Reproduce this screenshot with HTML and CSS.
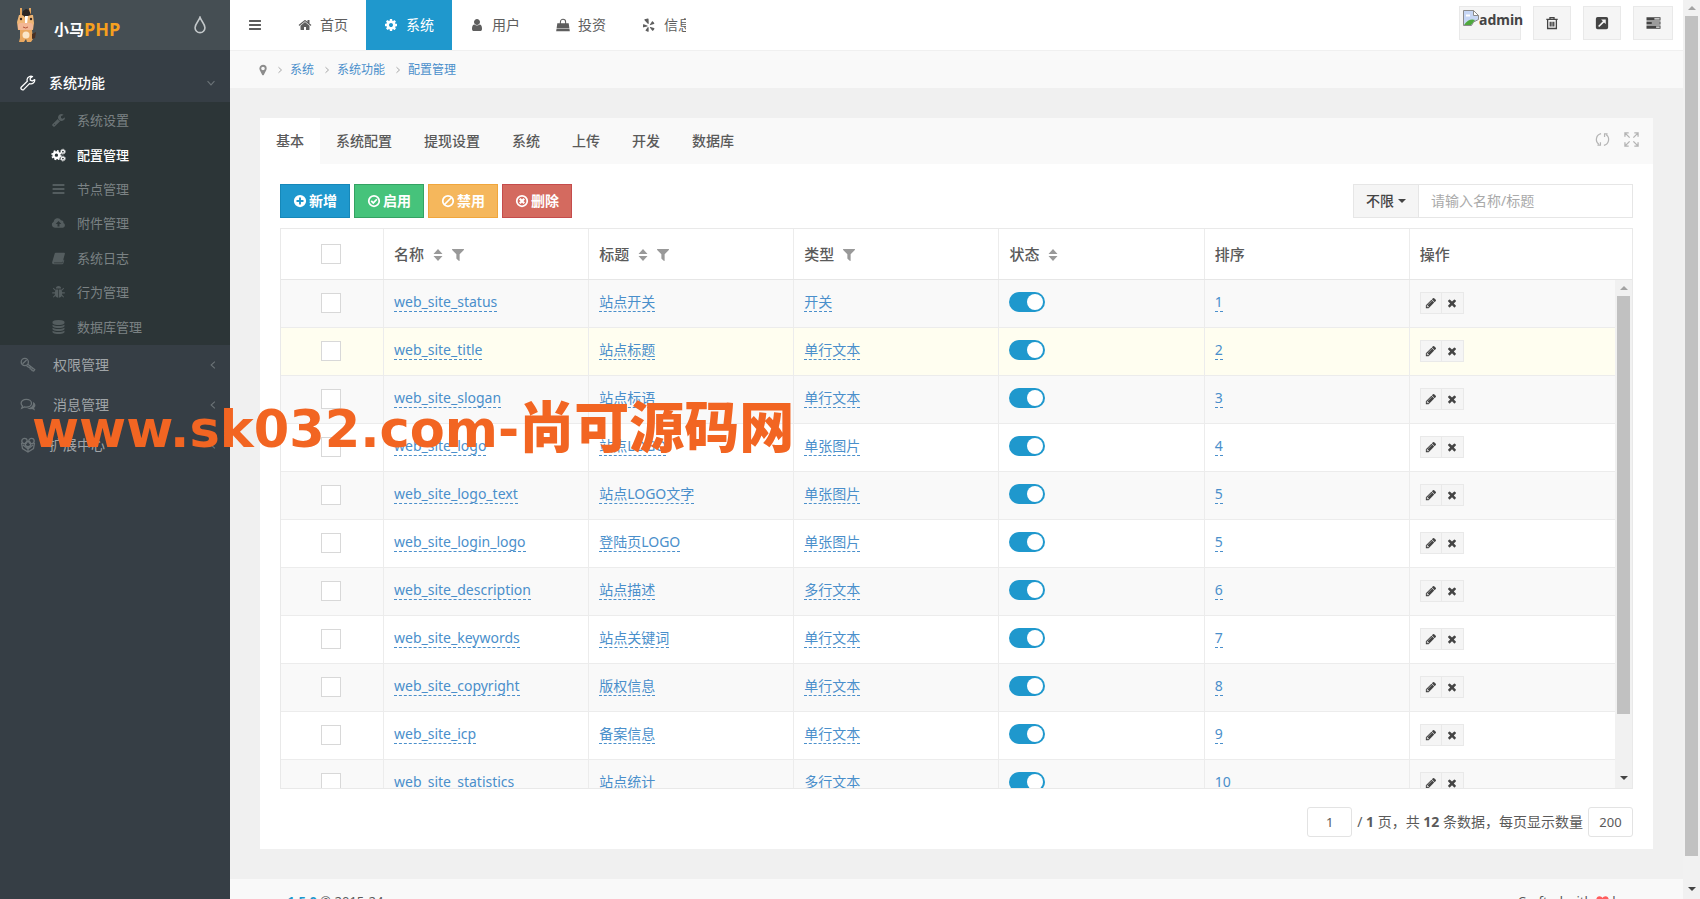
FILE: index.html
```
<!DOCTYPE html>
<html lang="zh-CN">
<head>
<meta charset="utf-8">
<title>配置管理</title>
<link rel="stylesheet" href="styles.css">
</head>
<body>
<svg class="sprite" aria-hidden="true">
  <symbol id="bars" viewBox="0 0 1792 1792"><path d="M1664 1344v128q0 26-19 45t-45 19h-1408q-26 0-45-19t-19-45v-128q0-26 19-45t45-19h1408q26 0 45 19t19 45zm0-512v128q0 26-19 45t-45 19h-1408q-26 0-45-19t-19-45v-128q0-26 19-45t45-19h1408q26 0 45 19t19 45zm0-512v128q0 26-19 45t-45 19h-1408q-26 0-45-19t-19-45v-128q0-26 19-45t45-19h1408q26 0 45 19t19 45z"/></symbol>
  <symbol id="home" viewBox="0 0 1792 1792"><path d="M1472 992v480q0 26-19 45t-45 19h-384v-384h-256v384h-384q-26 0-45-19t-19-45v-480q0-1 .5-3t.5-3l575-474 575 474q1 2 1 6zm223-69l-62 74q-8 9-21 11h-3q-13 0-21-7l-692-577-692 577q-12 8-24 7-13-2-21-11l-62-74q-8-10-7-23.5t11-21.5l719-599q32-26 76-26t76 26l244 204v-195q0-14 9-23t23-9h192q14 0 23 9t9 23v408l219 182q10 8 11 21.5t-7 23.5z"/></symbol>
  <symbol id="cog" viewBox="0 0 1792 1792"><path d="M1152 896q0-106-75-181t-181-75-181 75-75 181 75 181 181 75 181-75 75-181zm512-109v222q0 12-8 23t-20 13l-185 28q-19 54-39 91 35 50 107 138 10 12 10 25t-9 23q-27 37-99 108t-94 71q-12 0-26-9l-138-108q-44 23-91 38-16 136-29 186-7 28-36 28h-222q-14 0-24.5-8.5t-11.5-21.5l-28-184q-49-16-90-37l-141 107q-10 9-25 9-14 0-25-11-126-114-165-168-7-10-7-23 0-12 8-23 15-21 51-66.5t54-70.5q-27-50-41-99l-183-27q-13-2-21-12.5t-8-23.5v-222q0-12 8-23t19-13l186-28q14-46 39-92-40-57-107-138-10-12-10-24 0-10 9-23 26-36 98.5-107.5t94.5-71.5q13 0 26 10l138 107q44-23 91-38 16-136 29-186 7-28 36-28h222q14 0 24.5 8.5t11.5 21.5l28 184q49 16 90 37l142-107q9-9 24-9 13 0 25 10 129 119 165 170 7 8 7 22 0 12-8 23-15 21-51 66.5t-54 70.5q26 50 41 98l183 28q13 2 21 12.5t8 23.5z"/></symbol>
  <symbol id="user" viewBox="0 0 1792 1792"><path d="M1536 1399q0 109-62.5 187t-150.5 78h-854q-88 0-150.5-78t-62.5-187q0-85 8.5-160.5t31.5-152 58.5-131 94-89 134.5-34.5q131 128 313 128t313-128q76 0 134.5 34.5t94 89 58.5 131 31.5 152 8.5 160.5zm-256-887q0 159-112.5 271.5t-271.5 112.5-271.5-112.5-112.5-271.5 112.5-271.5 271.5-112.5 271.5 112.5 112.5 271.5z"/></symbol>
  <symbol id="bag" viewBox="0 0 16 16"><path d="M1.500 6h13l.8 5.600H.7zM.6 12.400h14.800L15.800 15H.2z"/><path d="M5 8V4.500a3 3 0 0 1 6 0V8" fill="none" stroke="currentColor" stroke-width="1.200"/></symbol>
  <symbol id="yelp" viewBox="0 0 16 16"><path d="M3 1.500 6.500.6c.8-.1 1 .3 1 .9l.2 4.600c0 .8-.7 1-1.100.4L2.900 2.500c-.3-.5-.2-.8.1-1zM1.900 7l4 1.500c.8.300.8 1 0 1.200l-3.900 1c-.7.1-.9-.2-.9-.7 0-1 .1-1.700.3-2.500.1-.4.2-.6.5-.5zM7.600 11v4c0 .6-.4.8-.9.700-.9-.2-1.700-.5-2.400-1-.4-.3-.5-.6-.1-1L6.500 10.500c.5-.5 1.100-.2 1.100.5zM9.700 10.200l4 1.300c.5.200.6.5.4 1-.4.800-.9 1.400-1.600 2-.4.300-.7.200-1-.2l-2.300-3.200c-.4-.6-.1-1.100.5-.9zM9.100 7.300l2.300-3.200c.3-.5.700-.5 1-.2.7.6 1.200 1.300 1.600 2.100.2.400.1.700-.4.900l-3.800 1.200c-.7.200-1.100-.2-.7-.8z"/></symbol>
  <symbol id="drop" viewBox="0 0 16 16"><path d="M8 1.200C7 4.500 3.600 7 3.600 10.400a4.400 4.400 0 0 0 8.800 0C12.400 7 9 4.500 8 1.200z" fill="none" stroke="currentColor" stroke-width="1.400"/></symbol>
  <symbol id="wrench" viewBox="0 0 1792 1792"><path d="M448 1472q0-26-19-45t-45-19-45 19-19 45 19 45 45 19 45-19 19-45zm644-420l-682 682q-37 37-90 37-52 0-91-37l-106-108q-38-36-38-90 0-53 38-91l681-681q39 98 114.500 173.500t173.500 114.500zm634-435q0 39-23 106-47 134-164.500 217.500t-258.500 83.500q-185 0-316.500-131.500t-131.500-316.500 131.500-316.500 316.500-131.500q58 0 121.500 16.500t107.500 46.500q16 11 16 28t-16 28l-293 169v224l193 107q5-3 79-48.500t135.500-81 70.500-35.500q15 0 23.500 10t8.500 25z"/></symbol>
  <symbol id="wrench-o" viewBox="0 0 16 16"><path d="M14.700 4.600 12.200 6 10.300 5.200 10.200 3.200 12.500 1.500C10.300.7 7.400 2 7.100 4.500c-.1.800 0 1.300.2 1.800L1.400 12c-1.400 1.600.8 3.800 2.400 2.400l5.700-5.800c2.900.9 5.600-1 5.200-4z" fill="none" stroke="currentColor" stroke-width="1.300" stroke-linejoin="round"/></symbol>
  <symbol id="cogs" viewBox="0 0 18 16"><circle cx="6.500" cy="8.200" r="3.400" fill="none" stroke="currentColor" stroke-width="2.800"/><circle cx="6.500" cy="8.200" r="5.200" fill="none" stroke="currentColor" stroke-width="2" stroke-dasharray="2.100 2"/><circle cx="14.300" cy="4" r="1.800" fill="none" stroke="currentColor" stroke-width="1.500"/><circle cx="14.300" cy="4" r="2.900" fill="none" stroke="currentColor" stroke-width="1" stroke-dasharray="1.300 1"/><circle cx="14.300" cy="12.300" r="1.800" fill="none" stroke="currentColor" stroke-width="1.500"/><circle cx="14.300" cy="12.300" r="2.900" fill="none" stroke="currentColor" stroke-width="1" stroke-dasharray="1.300 1"/></symbol>
  <symbol id="cloud" viewBox="0 0 16 16"><path fill-rule="evenodd" d="M4 13.500a3.600 3.600 0 0 1-1.500-6.900A4.500 4.500 0 0 1 11 5a2.500 2.500 0 0 1 2.700 2.900 3 3 0 0 1-.6 5.600zM8 5.800 4.800 9h2.100v3h2.200V9h2.100z"/></symbol>
  <symbol id="book" viewBox="0 0 16 16"><path d="M5.200 2h9.300c.8 0 1 .5.800 1.200l-2.500 9c-.2.600-.7.900-1.300.9H3.200c-.7 0-.8.900 0 .9h9.300l1.200-4 1-.1-1.200 4.400c-.2.500-.6.800-1.200.8H2.700C1 15 .3 13.600.9 12.200l2.700-9C3.800 2.300 4.400 2 5.200 2z"/></symbol>
  <symbol id="bug" viewBox="0 0 16 16"><path d="M5 4a3 3 0 0 1 6 0zM4.300 5h3.300v9.500A4.400 4.400 0 0 1 3.800 10zM8.400 5h3.300l.5 5a4.400 4.400 0 0 1-3.800 4.500z"/><path d="M4.300 6 2 3.500M11.700 6 14 3.500M4 9H.8M12 9h3.200M4.300 11.500 2 14M11.700 11.500 14 14" stroke="currentColor" stroke-width="1.200"/></symbol>
  <symbol id="database" viewBox="0 0 1792 1792"><path d="M896 768q237 0 443-43t325-127v170q0 69-103 128t-280 93.500-385 34.500-385-34.500-280-93.500-103-128v-170q119 84 325 127t443 43zm0 768q237 0 443-43t325-127v170q0 69-103 128t-280 93.500-385 34.500-385-34.500-280-93.500-103-128v-170q119 84 325 127t443 43zm0-384q237 0 443-43t325-127v170q0 69-103 128t-280 93.500-385 34.500-385-34.500-280-93.500-103-128v-170q119 84 325 127t443 43zm0-1152q208 0 385 34.500t280 93.500 103 128v128q0 69-103 128t-280 93.500-385 34.500-385-34.500-280-93.500-103-128v-128q0-69 103-128t280-93.500 385-34.500z"/></symbol>
  <symbol id="key" viewBox="0 0 16 16"><g fill="none" stroke="currentColor" stroke-width="1.300"><circle cx="4.800" cy="5" r="3.600"/><path d="M2.600 6.800 6.600 3M7.800 7.200l6.900 5.400-1 1.500-1.700-.5-.2-1.500-1.600-.2-.3-1.500-1.500-.3-1.800-1.400"/></g></symbol>
  <symbol id="chat" viewBox="0 0 16 16"><path d="M6.300 2.400c3 0 5.200 1.700 5.200 3.900s-2.200 3.900-5.200 3.900c-.7 0-1.300-.1-1.900-.2l-2.700 1.300.8-2.200C1.600 8.400 1.100 7.400 1.100 6.300c0-2.200 2.200-3.900 5.200-3.900z" fill="none" stroke="currentColor" stroke-width="1.300"/><path d="M12.900 5c1.500.7 2.500 1.800 2.500 3.300 0 1-.5 1.900-1.300 2.600l1 2.500-3.100-1.300c-1.700.4-3.600.1-4.900-.8 3.800-.1 6.700-2.900 5.800-6.300z"/></symbol>
  <symbol id="heap" viewBox="0 0 16 16"><g fill="none" stroke="currentColor" stroke-width="1.300"><circle cx="4.500" cy="4" r="2.700"/><circle cx="11.500" cy="4" r="2.700"/><circle cx="8" cy="7" r="2.700"/><path d="M1.500 6l1 5.500L8 15l5.500-3.500 1-5.500M3 8l5 4 5-4M8 10v5"/></g></symbol>
  <symbol id="pin" viewBox="0 0 16 16"><path fill-rule="evenodd" d="M8 1a4.900 4.900 0 0 1 4.900 4.900c0 .8-.2 1.400-.5 2L9 14.500c-.5.800-1.500.8-2 0L3.600 7.900A4.900 4.900 0 0 1 8 1zm0 2.500a2.400 2.400 0 1 0 0 4.800 2.400 2.400 0 0 0 0-4.800z"/></symbol>
  <symbol id="chevron" viewBox="0 0 16 16"><path d="M5 2.500 11 8l-6 5.500" fill="none" stroke="currentColor" stroke-width="1.700"/></symbol>
  <symbol id="trash" viewBox="0 0 16 16"><path d="M5.700 3V1.800h4.600V3M1.500 3.800h13M3 4v10.300h10V4M6 6.500v5.500M8 6.500v5.500M10 6.500v5.500" fill="none" stroke="currentColor" stroke-width="1.500"/></symbol>
  <symbol id="external" viewBox="0 0 16 16"><path fill-rule="evenodd" d="M3 1h10a2 2 0 0 1 2 2v10a2 2 0 0 1-2 2H3a2 2 0 0 1-2-2V3a2 2 0 0 1 2-2zm4 3 2 2-5.500 5.300 1.400 1.400L10.300 7.300l2 1.900V4z"/></symbol>
  <symbol id="tasks" viewBox="0 0 16 16"><path fill-rule="evenodd" d="M0 1.500h16v3.600H0zm9 1.200v1.200h6V2.700zM0 6.200h16v3.600H0zm6 1.200v1.200h9V7.400zM0 10.900h16v3.600H0zm11 1.200v1.200h4v-1.200z"/></symbol>
  <symbol id="refresh" viewBox="0 0 16 16"><path d="M6.500 1.800A6.300 6.300 0 0 0 4 13M9.500 14.200A6.300 6.300 0 0 0 12 3M5.800 10.800V14H2.600M10.200 5.200V2h3.200" fill="none" stroke="currentColor" stroke-width="1.300"/></symbol>
  <symbol id="expand" viewBox="0 0 16 16"><path d="M1 5V1h4M11 1h4v4M15 11v4h-4M5 15H1v-4M1.500 1.500l4.500 4.500M14.500 1.500 10 6M14.500 14.500 10 10M1.500 14.500 6 10" fill="none" stroke="currentColor" stroke-width="1.400"/></symbol>
  <symbol id="plus-c" viewBox="0 0 16 16"><path fill-rule="evenodd" d="M8 1a7 7 0 1 1 0 14A7 7 0 0 1 8 1zM6.900 4v2.900H4v2.200h2.900V12h2.200V9.100H12V6.900H9.100V4z"/></symbol>
  <symbol id="check-c" viewBox="0 0 16 16"><g fill="none" stroke="currentColor" stroke-width="2"><circle cx="8" cy="8" r="6"/><path d="M4.800 7.800 7.200 10.200 11.300 6"/></g></symbol>
  <symbol id="ban" viewBox="0 0 16 16"><g fill="none" stroke="currentColor" stroke-width="2"><circle cx="8" cy="8" r="6"/><path d="M4 12 12 4"/></g></symbol>
  <symbol id="times-c" viewBox="0 0 16 16"><g fill="none" stroke="currentColor" stroke-width="2"><circle cx="8" cy="8" r="6"/><path d="M5.500 5.500l5 5M10.500 5.500l-5 5" stroke-width="2.600"/></g></symbol>
  <symbol id="sort" viewBox="0 0 10 14"><path d="M5 1l4.500 5h-9zM5 13 .5 8h9z"/></symbol>
  <symbol id="filter" viewBox="0 0 1408 1408"><path d="M1403 39q17 41-14 70l-493 493v742q0 42-39 59-13 5-25 5-27 0-45-19l-256-256q-19-19-19-45v-486l-493-493q-31-29-14-70 17-39 59-39h1280q42 0 59 39z"/></symbol>
  <symbol id="pencil" viewBox="0 0 1792 1792"><path d="M491 1536l91-91-235-235-91 91v107h128v128h107zm523-928q0-22-22-22-10 0-17 7l-542 542q-7 7-7 17 0 22 22 22 10 0 17-7l542-542q7-7 7-17zm-54-192l416 416-832 832h-416v-416zm683 96q0 53-37 90l-166 166-416-416 166-165q36-38 90-38 53 0 91 38l235 234q37 39 37 91z"/></symbol>
  <symbol id="times" viewBox="0 0 1792 1792"><path d="M1490 1322q0 40-28 68l-136 136q-28 28-68 28t-68-28l-294-294-294 294q-28 28-68 28t-68-28l-136-136q-28-28-28-68t28-68l294-294-294-294q-28-28-28-68t28-68l136-136q28-28 68-28t68 28l294 294 294-294q28-28 68-28t68 28l136 136q28 28 28 68t-28 68l-294 294 294 294q28 28 28 68z"/></symbol>
  <symbol id="caret" viewBox="0 0 8 4"><path d="M0 0h8L4 4z"/></symbol>
  <symbol id="caret-up" viewBox="0 0 8 4"><path d="M0 4h8L4 0z"/></symbol>
  <symbol id="heart" viewBox="0 0 16 16"><path d="M8 14.500 1.500 8.300C-1 5.500 1 1.500 4.300 1.500 6 1.500 7.200 2.500 8 3.700 8.800 2.500 10 1.500 11.700 1.500 15 1.500 17 5.500 14.500 8.300z"/></symbol>
</svg>

<div class="page">
  <aside class="sidebar">
    <div class="brand">
      <svg class="mascot" viewBox="0 0 20 36" aria-hidden="true">
        <path d="M4 1h2v9H4zM13 1h2v9h-2z" fill="#e3a560"/><path d="M3 8h14l1 8-1 7H2L1 15z" fill="#efb676"/>
        <path d="M6 8 7 4l3-2 3 1 2 5-3 1-2 3-2-3z" fill="#2c2522"/><path d="M9 9h3l-1 8H9z" fill="#fff"/>
        <circle cx="5" cy="12" r="1.200" fill="#3a2a22"/><circle cx="15" cy="12" r="1.200" fill="#3a2a22"/>
        <rect x="2" y="16" width="15" height="7" rx="3" fill="#f3b795"/><path d="M7 20q3 2 5 0" stroke="#b4573e" fill="none"/>
        <path d="M4 23h12l1 9-2 3h-4l-1-3-2 3H3l1-4z" fill="#e9a860"/><ellipse cx="10" cy="28" rx="3.500" ry="3.500" fill="#fbe7c9"/>
        <path d="M16 27l4-2-1 6-3 1z" fill="#4a3022"/>
      </svg>
      <span class="brand-cn">小马</span><span class="brand-php">PHP</span>
      <svg class="icon brand-drop"><use href="#drop"/></svg>
    </div>
    <nav>
      <a class="group open" href="#"><svg class="icon"><use href="#wrench-o"/></svg><span>系统功能</span><svg class="arrow down"><use href="#chevron"/></svg></a>
      <div class="submenu">
        <a href="#"><svg class="icon"><use href="#wrench"/></svg>系统设置</a>
        <a class="current" href="#"><svg class="icon"><use href="#cogs"/></svg>配置管理</a>
        <a href="#"><svg class="icon"><use href="#bars"/></svg>节点管理</a>
        <a href="#"><svg class="icon"><use href="#cloud"/></svg>附件管理</a>
        <a href="#"><svg class="icon"><use href="#book"/></svg>系统日志</a>
        <a href="#"><svg class="icon"><use href="#bug"/></svg>行为管理</a>
        <a href="#"><svg class="icon"><use href="#database"/></svg>数据库管理</a>
      </div>
      <a class="group" href="#"><svg class="icon"><use href="#key"/></svg><span>权限管理</span><svg class="arrow left"><use href="#chevron"/></svg></a>
      <a class="group" href="#"><svg class="icon"><use href="#chat"/></svg><span>消息管理</span><svg class="arrow left"><use href="#chevron"/></svg></a>
      <a class="group tight" href="#"><svg class="icon"><use href="#heap"/></svg><span>扩展中心</span><svg class="arrow left"><use href="#chevron"/></svg></a>
    </nav>
  </aside>

  <div class="main">
    <header class="topbar">
      <button class="burger" type="button" aria-label="菜单"><svg class="icon"><use href="#bars"/></svg></button>
      <nav class="topnav">
        <a href="#"><svg class="icon"><use href="#home"/></svg>首页</a>
        <a class="active" href="#"><svg class="icon"><use href="#cog"/></svg>系统</a>
        <a href="#"><svg class="icon"><use href="#user"/></svg>用户</a>
        <a href="#"><svg class="icon"><use href="#bag"/></svg>投资</a>
        <a class="cut" href="#"><svg class="icon"><use href="#yelp"/></svg><span>信息</span></a>
      </nav>
      <div class="tools">
        <button class="tool avatar" type="button">
          <svg class="broken" viewBox="0 0 16 16" aria-hidden="true"><path d="M.5.500h10l5 5v4l-5 2.500-2 3.500h-8z" fill="#c6d6f5" stroke="#8b8b8b"/><path d="M10.500.5v5h5z" fill="#fff" stroke="#8b8b8b"/><path d="M3 4.500h4v2H3z" fill="#fff"/><path d="M1 15q5-7 11-5l-4 5z" fill="#4fa83d"/></svg><span>admin</span>
        </button>
        <button class="tool" type="button" aria-label="清空缓存"><svg class="icon"><use href="#trash"/></svg></button>
        <button class="tool" type="button" aria-label="打开前台"><svg class="icon"><use href="#external"/></svg></button>
        <button class="tool" type="button" aria-label="侧栏"><svg class="icon wide"><use href="#tasks"/></svg></button>
      </div>
    </header>

    <nav class="crumbs" aria-label="位置">
      <svg class="icon"><use href="#pin"/></svg>
      <svg class="sep"><use href="#chevron"/></svg><a href="#">系统</a>
      <svg class="sep"><use href="#chevron"/></svg><a href="#">系统功能</a>
      <svg class="sep"><use href="#chevron"/></svg><a href="#">配置管理</a>
    </nav>

    <main class="content">
      <section class="block">
        <div class="tabs">
          <a class="active" href="#">基本</a><a href="#">系统配置</a><a href="#">提现设置</a><a href="#">系统</a><a href="#">上传</a><a href="#">开发</a><a href="#">数据库</a>
          <div class="tab-tools">
            <button type="button" aria-label="刷新"><svg class="icon"><use href="#refresh"/></svg></button>
            <button type="button" aria-label="全屏"><svg class="icon"><use href="#expand"/></svg></button>
          </div>
        </div>
        <div class="body">
          <div class="toolbar">
            <button class="btn blue" type="button"><svg class="icon"><use href="#plus-c"/></svg>新增</button>
            <button class="btn green" type="button"><svg class="icon"><use href="#check-c"/></svg>启用</button>
            <button class="btn orange" type="button"><svg class="icon"><use href="#ban"/></svg>禁用</button>
            <button class="btn red" type="button"><svg class="icon"><use href="#times-c"/></svg>删除</button>
            <div class="search">
              <button type="button">不限<svg class="caret"><use href="#caret"/></svg></button>
              <input type="text" placeholder="请输入名称/标题" aria-label="搜索">
            </div>
          </div>

          <div class="grid">
            <table class="head">
              <colgroup><col class="c-check"><col><col><col><col><col><col></colgroup>
              <thead><tr>
                <th class="check"><input type="checkbox" aria-label="全选"></th>
                <th>名称<svg class="sort"><use href="#sort"/></svg><svg class="filter"><use href="#filter"/></svg></th>
                <th>标题<svg class="sort"><use href="#sort"/></svg><svg class="filter"><use href="#filter"/></svg></th>
                <th>类型<svg class="filter"><use href="#filter"/></svg></th>
                <th>状态<svg class="sort"><use href="#sort"/></svg></th>
                <th>排序</th>
                <th>操作</th>
              </tr></thead>
            </table>
            <div class="scroll">
              <div class="rows">
                <table>
                  <colgroup><col class="c-check"><col><col><col><col><col><col></colgroup>
                  <tbody>
                    <tr><td class="check"><input type="checkbox" aria-label="选择"></td><td><a href="#">web_site_status</a></td><td><a href="#">站点开关</a></td><td><a href="#">开关</a></td><td><input class="switch" type="checkbox" checked aria-label="状态"></td><td><a href="#">1</a></td><td><div class="acts"><button type="button" aria-label="编辑"><svg><use href="#pencil"/></svg></button><button type="button" aria-label="删除"><svg><use href="#times"/></svg></button></div></td></tr>
                    <tr class="hover"><td class="check"><input type="checkbox" aria-label="选择"></td><td><a href="#">web_site_title</a></td><td><a href="#">站点标题</a></td><td><a href="#">单行文本</a></td><td><input class="switch" type="checkbox" checked aria-label="状态"></td><td><a href="#">2</a></td><td><div class="acts"><button type="button" aria-label="编辑"><svg><use href="#pencil"/></svg></button><button type="button" aria-label="删除"><svg><use href="#times"/></svg></button></div></td></tr>
                    <tr><td class="check"><input type="checkbox" aria-label="选择"></td><td><a href="#">web_site_slogan</a></td><td><a href="#">站点标语</a></td><td><a href="#">单行文本</a></td><td><input class="switch" type="checkbox" checked aria-label="状态"></td><td><a href="#">3</a></td><td><div class="acts"><button type="button" aria-label="编辑"><svg><use href="#pencil"/></svg></button><button type="button" aria-label="删除"><svg><use href="#times"/></svg></button></div></td></tr>
                    <tr><td class="check"><input type="checkbox" aria-label="选择"></td><td><a href="#">web_site_logo</a></td><td><a href="#">站点LOGO</a></td><td><a href="#">单张图片</a></td><td><input class="switch" type="checkbox" checked aria-label="状态"></td><td><a href="#">4</a></td><td><div class="acts"><button type="button" aria-label="编辑"><svg><use href="#pencil"/></svg></button><button type="button" aria-label="删除"><svg><use href="#times"/></svg></button></div></td></tr>
                    <tr><td class="check"><input type="checkbox" aria-label="选择"></td><td><a href="#">web_site_logo_text</a></td><td><a href="#">站点LOGO文字</a></td><td><a href="#">单张图片</a></td><td><input class="switch" type="checkbox" checked aria-label="状态"></td><td><a href="#">5</a></td><td><div class="acts"><button type="button" aria-label="编辑"><svg><use href="#pencil"/></svg></button><button type="button" aria-label="删除"><svg><use href="#times"/></svg></button></div></td></tr>
                    <tr><td class="check"><input type="checkbox" aria-label="选择"></td><td><a href="#">web_site_login_logo</a></td><td><a href="#">登陆页LOGO</a></td><td><a href="#">单张图片</a></td><td><input class="switch" type="checkbox" checked aria-label="状态"></td><td><a href="#">5</a></td><td><div class="acts"><button type="button" aria-label="编辑"><svg><use href="#pencil"/></svg></button><button type="button" aria-label="删除"><svg><use href="#times"/></svg></button></div></td></tr>
                    <tr><td class="check"><input type="checkbox" aria-label="选择"></td><td><a href="#">web_site_description</a></td><td><a href="#">站点描述</a></td><td><a href="#">多行文本</a></td><td><input class="switch" type="checkbox" checked aria-label="状态"></td><td><a href="#">6</a></td><td><div class="acts"><button type="button" aria-label="编辑"><svg><use href="#pencil"/></svg></button><button type="button" aria-label="删除"><svg><use href="#times"/></svg></button></div></td></tr>
                    <tr><td class="check"><input type="checkbox" aria-label="选择"></td><td><a href="#">web_site_keywords</a></td><td><a href="#">站点关键词</a></td><td><a href="#">单行文本</a></td><td><input class="switch" type="checkbox" checked aria-label="状态"></td><td><a href="#">7</a></td><td><div class="acts"><button type="button" aria-label="编辑"><svg><use href="#pencil"/></svg></button><button type="button" aria-label="删除"><svg><use href="#times"/></svg></button></div></td></tr>
                    <tr><td class="check"><input type="checkbox" aria-label="选择"></td><td><a href="#">web_site_copyright</a></td><td><a href="#">版权信息</a></td><td><a href="#">单行文本</a></td><td><input class="switch" type="checkbox" checked aria-label="状态"></td><td><a href="#">8</a></td><td><div class="acts"><button type="button" aria-label="编辑"><svg><use href="#pencil"/></svg></button><button type="button" aria-label="删除"><svg><use href="#times"/></svg></button></div></td></tr>
                    <tr><td class="check"><input type="checkbox" aria-label="选择"></td><td><a href="#">web_site_icp</a></td><td><a href="#">备案信息</a></td><td><a href="#">单行文本</a></td><td><input class="switch" type="checkbox" checked aria-label="状态"></td><td><a href="#">9</a></td><td><div class="acts"><button type="button" aria-label="编辑"><svg><use href="#pencil"/></svg></button><button type="button" aria-label="删除"><svg><use href="#times"/></svg></button></div></td></tr>
                    <tr><td class="check"><input type="checkbox" aria-label="选择"></td><td><a href="#">web_site_statistics</a></td><td><a href="#">站点统计</a></td><td><a href="#">多行文本</a></td><td><input class="switch" type="checkbox" checked aria-label="状态"></td><td><a href="#">10</a></td><td><div class="acts"><button type="button" aria-label="编辑"><svg><use href="#pencil"/></svg></button><button type="button" aria-label="删除"><svg><use href="#times"/></svg></button></div></td></tr>
                  </tbody>
                </table>
              </div>
              <div class="bar" aria-hidden="true"><svg class="tip dim"><use href="#caret-up"/></svg><div class="track"><i class="thumb"></i></div><svg class="tip"><use href="#caret"/></svg></div>
            </div>
          </div>

          <div class="pager">
            <input type="text" value="1" aria-label="页码">
            <span>/ <b>1</b> 页，共 <b>12</b> 条数据，每页显示数量</span>
            <input type="text" value="200" aria-label="每页显示数量">
          </div>
        </div>
      </section>
    </main>

    <footer class="footer">
      <div><a href="#">xpp 1.5.0</a> © 2015-24</div>
      <div>Crafted with <svg class="heart"><use href="#heart"/></svg> by <a href="#">xpp</a></div>
    </footer>
  </div>

  <div class="bar outer" aria-hidden="true"><svg class="tip dim"><use href="#caret-up"/></svg><div class="track"><i class="thumb"></i></div><svg class="tip"><use href="#caret"/></svg></div>
  <div class="watermark">www.sk032.com-<span>尚可源码网</span></div>
</div>
</body>
</html>
```
FILE: styles.css
```
* { box-sizing: border-box; }
body {
  margin: 0;
  font: 14px/20px "Noto Sans", "Noto Sans CJK SC", sans-serif;
  color: #5a5a5a;
  background: #f0f0f0;
}
a { color: #4a8fcb; text-decoration: none; }
button, input { font: inherit; color: inherit; margin: 0; }
button { cursor: pointer; }
svg { fill: currentColor; flex: none; }
.sprite { position: absolute; width: 0; height: 0; }
.icon { width: 14px; height: 14px; }

.page { position: relative; display: flex; height: 100vh; overflow: hidden; }

/* Sidebar */
.sidebar { width: 230px; flex: none; background: #363e45; }
.brand { display: flex; align-items: center; height: 50px; padding: 0 21px 0 16px; background: #454e53; }
.mascot { width: 20px; height: 36px; margin-right: 18px; }
.brand-cn { font-size: 15px; font-weight: 700; color: #fff; padding-top: 8px; }
.brand-php { font: 700 18px/20px "Open Sans", sans-serif; color: #f6a01f; padding-top: 8px; }
.brand-drop { width: 18px; height: 18px; margin-left: auto; color: #c3c8ca; }
.group { display: flex; align-items: center; height: 40px; padding: 0 12px 0 20px; color: #a0a5a8; }
.group .icon { width: 16px; height: 16px; margin-right: 17px; color: #6b7377; }
.group .arrow { width: 10px; height: 10px; margin-left: auto; color: #6b7377; }
.arrow.down { transform: rotate(90deg); }
.arrow.left { transform: rotate(180deg); }
.group.tight .icon { margin-right: 13px; }
.group.open { height: 52px; padding: 14px 14px 0 20px; color: #fff; font-weight: 500; }
.group.open .icon { color: #fff; margin-right: 13px; }
.submenu { display: grid; grid-auto-rows: 1fr; height: 243px; padding: 1px 0; background: #2c3537; font-size: 13px; }
.submenu a { display: flex; align-items: center; padding-left: 51px; color: #7b8284; }
.submenu .icon { width: 15px; margin-right: 11px; color: #545d5f; }
.submenu .current, .submenu .current .icon { color: #fff; font-weight: 500; }

/* Top bar */
.main { flex: 1; min-width: 0; display: flex; flex-direction: column; }
.topbar { display: flex; flex: none; height: 51px; background: #fff; border-bottom: 1px solid #f0f0f0; }
.burger { display: flex; align-items: center; width: 50px; padding: 0 0 0 18px; border: 0; background: none; }
.topnav { display: flex; }
.topnav a { display: flex; align-items: center; gap: 8px; padding: 0 18px; color: #5e5e5e; }
.topnav .active { background: #1f98cd; color: #fff; }
.topnav .cut span { width: 22px; height: 20px; overflow: hidden; white-space: nowrap; }
.tools { display: flex; gap: 12px; margin-left: auto; padding: 6px 10px 10px 0; }
.tool { display: flex; align-items: center; justify-content: center; width: 38px; padding: 0; background: #f5f5f5; border: 1px solid #e9e9e9; color: #444; }
.tool:last-child { width: 40px; }
.tool .wide { width: 15px; }
.avatar { width: 62px; justify-content: flex-start; align-items: flex-start; padding: 3px; font-weight: 700; }
.broken { width: 16px; height: 16px; }

.crumbs { display: flex; flex: none; align-items: center; height: 37px; padding-left: 27px; background: #f9f9f9; font-size: 12px; }
.crumbs .icon { width: 12px; height: 12px; color: #8c8c8c; margin-right: 5px; }
.crumbs .sep { width: 8px; height: 8px; margin: 0 6px 0 9px; color: #999; }
.crumbs .icon + .sep { margin-left: 2px; }

/* Block */
.content { padding: 30px; flex: none; }
.block { background: #fff; }
.tabs { display: flex; height: 46px; background: #f9f9f9; }
.tabs a { padding: 13px 16px; color: #5a5a5a; font-weight: 500; }
.tabs .active { background: #fff; }
.tab-tools { display: flex; gap: 14px; margin-left: auto; padding: 14px 14px 0 0; }
.tab-tools button { height: 15px; padding: 0; border: 0; background: none; color: #b4b4b4; display: flex; }
.tab-tools .icon { width: 15px; height: 15px; }
.body { padding: 20px 20px 12px; }
.toolbar { display: flex; gap: 4px; height: 34px; margin-bottom: 10px; }
.btn { display: flex; align-items: center; gap: 2px; padding: 0 12px; border: 1px solid; color: #fff; font-weight: 700; }
.blue { background: #1f98cd; border-color: #1688b9; }
.green { background: #46c37b; border-color: #34a263; }
.orange { background: #f5b75c; border-color: #f0a63c; }
.red { background: #d46a5f; border-color: #c54c4c; }
.btn .icon { width: 14px; }
.search { display: flex; margin-left: auto; width: 280px; }
.search button { display: flex; align-items: center; gap: 4px; padding: 0 12px; background: #f5f5f5; border: 1px solid #e6e6e6; font-weight: 500; color: #444; }
.caret { width: 8px; height: 4px; }
.search input { flex: 1; min-width: 0; padding: 0 12px; border: 1px solid #e6e6e6; border-left: 0; background: #fff; }
.search input::placeholder { color: #aaa; }

/* Data table */
.grid { border: 1px solid #e9e9e9; }
table { width: calc(100% - 17px); table-layout: fixed; border-collapse: separate; border-spacing: 0; }
.c-check { width: 103px; }
th, td { padding: 0 10px; text-align: left; border-right: 1px solid #ececec; }
th:last-child, td:last-child { border-right: 0; }
.head { height: 50px; }
th { font-size: 15px; font-weight: 500; }
th.check, td.check { text-align: center; padding: 0 2px 0 0; }
.sort { width: 10px; height: 14px; margin-left: 9px; vertical-align: -2px; color: #999; }
.filter { width: 12px; height: 12px; margin-left: 9px; vertical-align: -1px; color: #999; }
.scroll { display: flex; height: 509px; border-top: 1px solid #e6e6e6; }
.rows { flex: 1; min-width: 0; overflow: hidden; }
.rows table { width: 100%; }
.rows td { height: 48px; padding-top: 12px; vertical-align: top; border-bottom: 1px solid #ececec; }
.rows td.check { padding-top: 13px; }
.rows tr:nth-child(odd) { background: #f9f9f9; }
.rows tr.hover { background: #fffef0; }
.rows td a { display: inline-block; line-height: 19px; border-bottom: 1px dashed #4a8fcb; }
.check input { appearance: none; display: block; width: 20px; height: 20px; margin: 0 auto; border: 1px solid #d8d8d8; background: #fff; }
.switch { appearance: none; display: block; width: 36px; height: 20px; padding: 2px; border-radius: 10px; background: #1f98cd; }
.switch::before { content: ""; display: block; width: 16px; height: 16px; margin-left: auto; border-radius: 50%; background: #fff; }
.acts { display: flex; }
.acts button { display: flex; align-items: center; justify-content: center; width: 22px; height: 22px; padding: 0; background: #f5f5f5; border: 1px solid #e9e9e9; color: #444; }
.acts button + button { border-left: 0; }
.acts svg { width: 12px; height: 12px; }

/* Scroll bars */
.bar { display: flex; flex-direction: column; align-items: center; flex: none; width: 17px; padding: 6px 0 8px; background: #f1f1f1; }
.tip { width: 8px; height: 4px; color: #444; }
.tip.dim { color: #a3a3a3; }
.track { flex: 1; width: 13px; padding: 6px 0 5px; }
.thumb { display: block; height: 88%; background: #c1c1c1; }
.outer .thumb { height: 97%; }

.pager { display: flex; align-items: center; justify-content: flex-end; gap: 5px; margin-top: 18px; }
.pager input { width: 45px; height: 30px; padding: 0; text-align: center; font-size: 13px; background: #fff; border: 1px solid #e3e3e3; border-radius: 3px; }

.footer { display: flex; justify-content: space-between; flex: none; padding: 12px 30px; background: #f9f9f9; font-size: 13px; }
.footer > div:first-child a { color: #1f98cd; font-weight: 700; }
.heart { width: 13px; height: 13px; color: #ff5c5c; vertical-align: -2px; }

.watermark { position: absolute; left: 32px; top: 386px; font: 700 51px/75px "DejaVu Sans", sans-serif; color: #f26522; white-space: nowrap; pointer-events: none; }
.watermark span { font-family: "Noto Sans CJK SC", sans-serif; font-size: 55px; font-weight: 900; }
```
